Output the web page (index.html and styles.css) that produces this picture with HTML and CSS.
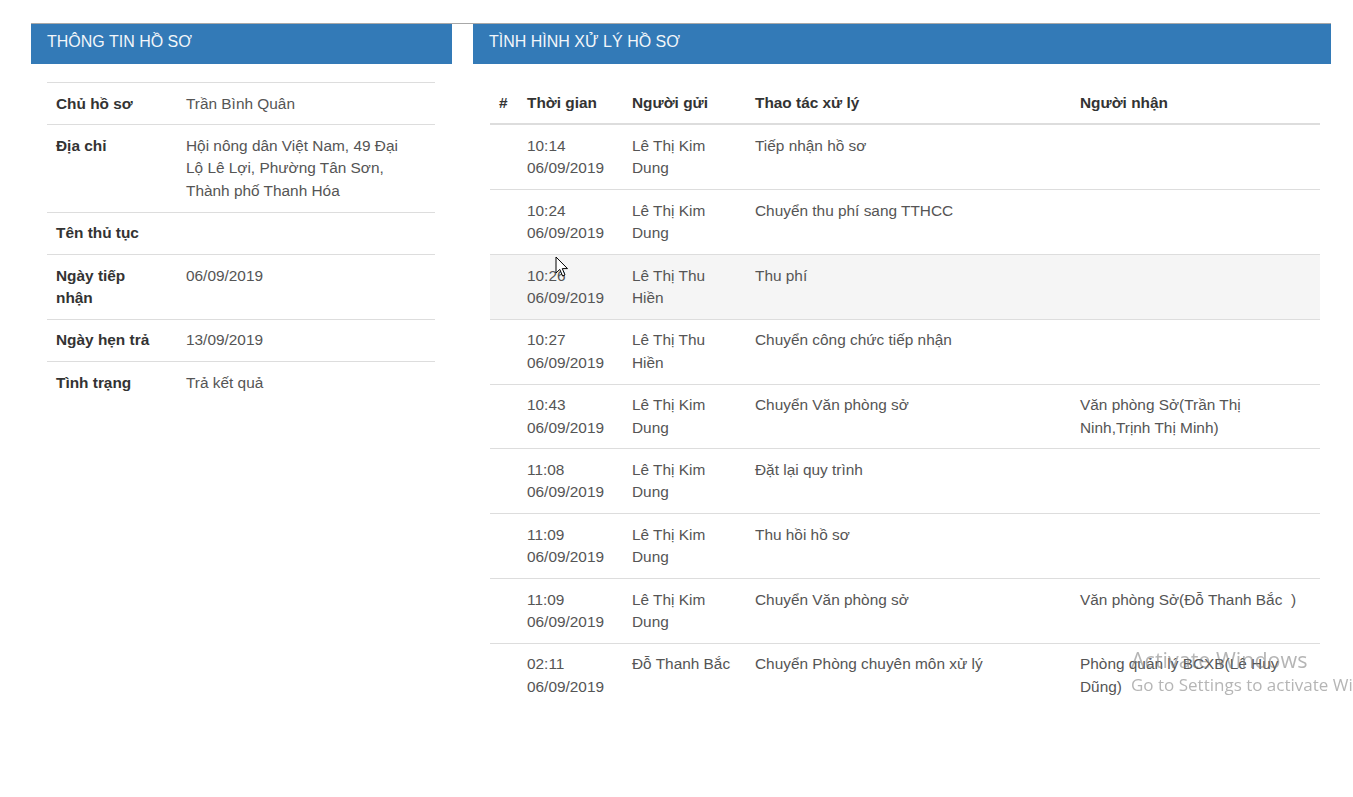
FILE: index.html
```html
<!DOCTYPE html>
<html lang="vi">
<head>
<meta charset="utf-8">
<title>Hồ sơ</title>
<link rel="stylesheet" href="styles.css">
</head>
<body>
<div class="page">
  <div class="topline"></div>
  <div class="cols">
    <section class="panel panel-left">
      <div class="panel-heading">THÔNG TIN HỒ SƠ</div>
      <div class="panel-body">
        <table class="info">
          <colgroup><col class="c-label"><col class="c-value"></colgroup>
          <tbody>
            <tr><th>Chủ hồ sơ</th><td>Trần Bình Quân</td></tr>
            <tr><th>Địa chỉ</th><td>Hội nông dân Việt Nam, 49 Đại Lộ Lê Lợi, Phường Tân Sơn, Thành phố Thanh Hóa</td></tr>
            <tr><th>Tên thủ tục</th><td></td></tr>
            <tr><th>Ngày tiếp nhận</th><td>06/09/2019</td></tr>
            <tr><th>Ngày hẹn trả</th><td>13/09/2019</td></tr>
            <tr><th>Tình trạng</th><td>Trả kết quả</td></tr>
          </tbody>
        </table>
      </div>
    </section>
    <section class="panel panel-right">
      <div class="panel-heading">TÌNH HÌNH XỬ LÝ HỒ SƠ</div>
      <div class="panel-body body-right">
        <table class="log">
          <colgroup><col class="c-num"><col class="c-time"><col class="c-from"><col class="c-action"><col class="c-to"></colgroup>
          <thead>
            <tr><th>#</th><th>Thời gian</th><th>Người gửi</th><th>Thao tác xử lý</th><th>Người nhận</th></tr>
          </thead>
          <tbody>
            <tr><td></td><td>10:14 06/09/2019</td><td>Lê Thị Kim Dung</td><td>Tiếp nhận hồ sơ</td><td></td></tr>
            <tr><td></td><td>10:24 06/09/2019</td><td>Lê Thị Kim Dung</td><td>Chuyển thu phí sang TTHCC</td><td></td></tr>
            <tr class="hover"><td></td><td>10:26 06/09/2019</td><td>Lê Thị Thu Hiền</td><td>Thu phí</td><td></td></tr>
            <tr><td></td><td>10:27 06/09/2019</td><td>Lê Thị Thu Hiền</td><td>Chuyển công chức tiếp nhận</td><td></td></tr>
            <tr><td></td><td>10:43 06/09/2019</td><td>Lê Thị Kim Dung</td><td>Chuyển Văn phòng sở</td><td>Văn phòng Sở(Trần Thị Ninh,Trịnh Thị Minh)</td></tr>
            <tr><td></td><td>11:08 06/09/2019</td><td>Lê Thị Kim Dung</td><td>Đặt lại quy trình</td><td></td></tr>
            <tr><td></td><td>11:09 06/09/2019</td><td>Lê Thị Kim Dung</td><td>Thu hồi hồ sơ</td><td></td></tr>
            <tr><td></td><td>11:09 06/09/2019</td><td>Lê Thị Kim Dung</td><td>Chuyển Văn phòng sở</td><td>Văn phòng Sở(Đỗ Thanh Bắc&nbsp; )</td></tr>
            <tr><td></td><td>02:11 06/09/2019</td><td>Đỗ Thanh Bắc</td><td>Chuyển Phòng chuyên môn xử lý</td><td>Phòng quản lý BCXB(Lê Huy Dũng)</td></tr>
          </tbody>
        </table>
      </div>
    </section>
  </div>
</div>

<svg class="cursor" width="14" height="22" viewBox="0 0 14 22" aria-hidden="true">
  <path d="M1 1 L1 17 L4.8 13.4 L7.6 20 L10 19 L7.3 12.6 L12.5 12.6 Z" fill="#fff" stroke="#000" stroke-width="1" stroke-linejoin="round"/>
</svg>

<div class="watermark">
  <div class="wm-title">Activate Windows</div>
  <div class="wm-sub">Go to Settings to activate Windows.</div>
</div>
</body>
</html>
```
FILE: styles.css
```css
html, body {
  margin: 0;
  padding: 0;
  background: #fff;
  overflow: hidden;
}
body {
  font-family: "Liberation Sans", Arial, sans-serif;
  font-size: 15.4px;
  line-height: 22.4px;
  color: #555;
}
.page {
  padding: 23px 0 0 31px;
}
.topline {
  width: 1300px;
  border-top: 1px solid #a8a8a8;
}
.cols {
  display: grid;
  grid-template-columns: 421px 858px;
  column-gap: 21px;
}
.panel-heading {
  background: #337ab7;
  color: #f2f6fa;
  height: 40px;
  line-height: 36px;
  padding: 0 16px;
  font-size: 16px;
}
.panel-body {
  padding: 18px 17px 0 16px;
}
.body-right {
  padding: 18px 10px 0 17px;
}
table {
  border-collapse: collapse;
  table-layout: fixed;
}
.info {
  width: 388px;
  border-top: 1px solid #ddd;
}
.c-label { width: 130px; }
.c-value { width: 258px; }
.info th, .info td {
  vertical-align: top;
  text-align: left;
  padding: 9.5px 9px;
}
.info tr + tr th, .info tr + tr td {
  border-top: 1px solid #ddd;
}
.info th {
  color: #333;
  font-weight: bold;
  padding-right: 22px;
}
.info td {
  padding-right: 28px;
}
.log {
  width: 830px;
}
.c-num { width: 28px; }
.c-time { width: 105px; }
.c-from { width: 123px; }
.c-action { width: 325px; }
.c-to { width: 249px; }
.log th, .log td {
  vertical-align: top;
  text-align: left;
  padding: 9.5px 9px;
}
.log td:last-child {
  padding-right: 20px;
}
.log thead th {
  color: #333;
  font-weight: bold;
  border-bottom: 2px solid #ddd;
}
.log tbody tr + tr td {
  border-top: 1px solid #ddd;
}
.log tbody tr.hover td {
  background: #f5f5f5;
}
.cursor {
  position: absolute;
  left: 555px;
  top: 256px;
}
.watermark {
  position: fixed;
  left: 1131px;
  top: 645px;
  white-space: nowrap;
  font-family: "Open Sans", "Noto Sans", sans-serif;
  color: rgba(120, 120, 120, 0.55);
}
.wm-title {
  font-size: 21.5px;
  line-height: 30px;
}
.wm-sub {
  font-size: 17px;
  line-height: 20px;
}
```
